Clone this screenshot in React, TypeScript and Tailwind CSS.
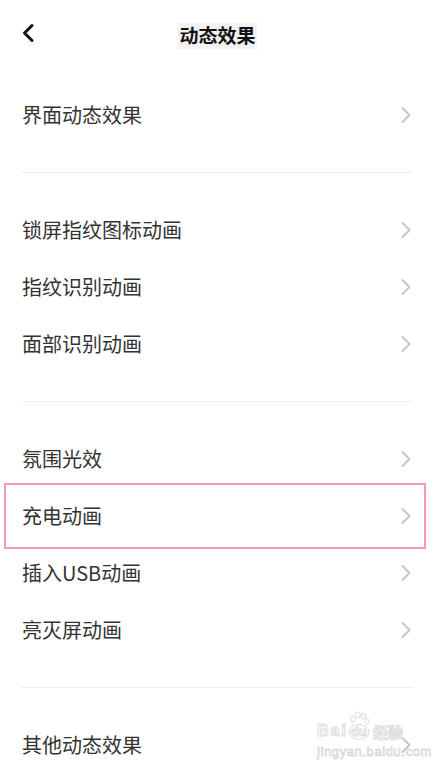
import React from "react";

const font = "font-['Noto_Sans_CJK_SC','Noto_Sans',sans-serif]";

function Chevron() {
  return (
    <svg width="12" height="18" viewBox="0 0 12 18" className="shrink-0">
      <path d="M2.5 2 L9.5 9 L2.5 16" fill="none" stroke="#c4c4c4" strokeWidth="1.8" strokeLinecap="round" strokeLinejoin="round" />
    </svg>
  );
}

function Row({ label }: { label: string }) {
  return (
    <div className="h-[57px] flex items-center justify-between pl-[22px] pr-[23px]">
      <span className="text-[20px] leading-none text-[#333333]">{label}</span>
      <Chevron />
    </div>
  );
}

function Divider() {
  return (
    <div className="h-[58px] flex items-center px-[22px]">
      <div className="h-px w-full bg-[#eeeeee]" />
    </div>
  );
}

export default function App() {
  return (
    <div className={`relative w-[435px] h-[768px] bg-white overflow-hidden ${font}`}>
      <div className="relative h-[68px] flex items-center justify-center">
        <svg width="14" height="20" viewBox="0 0 14 20" className="absolute left-[21px] top-[23px]">
          <path d="M11 2.5 L3.5 10 L11 17.5" fill="none" stroke="#111" strokeWidth="3" strokeLinecap="round" strokeLinejoin="round" />
        </svg>
        <span className="bg-[#f2f2f2] px-px pt-[1px] pb-[3px] text-[19px] leading-[22px] font-bold text-[#111] mt-[4px]">动态效果</span>
      </div>
      <div className="pt-[18px]">
        <Row label="界面动态效果" />
        <Divider />
        <Row label="锁屏指纹图标动画" />
        <Row label="指纹识别动画" />
        <Row label="面部识别动画" />
        <Divider />
        <Row label="氛围光效" />
        <div className="relative">
          <Row label="充电动画" />
          <div className="absolute left-[4px] right-[9px] top-[-4px] bottom-[-5px] border-2 border-[#f59ab5] pointer-events-none" />
        </div>
        <Row label="插入USB动画" />
        <Row label="亮灭屏动画" />
        <Divider />
        <Row label="其他动态效果" />
      </div>
      <div className="absolute left-[317px] top-[711px] flex flex-col items-start pointer-events-none">
        <div className="flex items-end">
          <span className="font-['Liberation_Sans',sans-serif] text-[16px] leading-none font-bold tracking-[2px] text-white [-webkit-text-stroke:1px_#dcdcdc] mb-[1px]">Bai</span>
          <div className="relative w-[22px] h-[29px]">
            <svg width="22" height="29" viewBox="0 0 22 29" className="absolute inset-0">
              <g fill="white" stroke="#dcdcdc" strokeWidth="1">
                <ellipse cx="5" cy="8" rx="2.3" ry="3" />
                <ellipse cx="10" cy="4" rx="2.3" ry="3" />
                <ellipse cx="15.5" cy="5" rx="2.3" ry="3" />
                <ellipse cx="19" cy="10.5" rx="2" ry="2.6" />
                <ellipse cx="11" cy="21" rx="10" ry="7.5" />
              </g>
            </svg>
            <span className="absolute left-[3px] top-[14px] font-['Liberation_Sans',sans-serif] text-[13px] leading-none font-bold text-white [-webkit-text-stroke:1px_#dcdcdc]">du</span>
          </div>
          <span className="text-[15px] leading-none font-bold text-white [-webkit-text-stroke:1px_#dcdcdc] ml-[3px] mb-[1px]">经验</span>
        </div>
        <span className="mt-[5px] font-['Liberation_Sans',sans-serif] text-[13px] leading-none tracking-[0.6px] text-white [-webkit-text-stroke:0.8px_#d8d8d8]">jingyan.baidu.com</span>
      </div>
    </div>
  );
}
